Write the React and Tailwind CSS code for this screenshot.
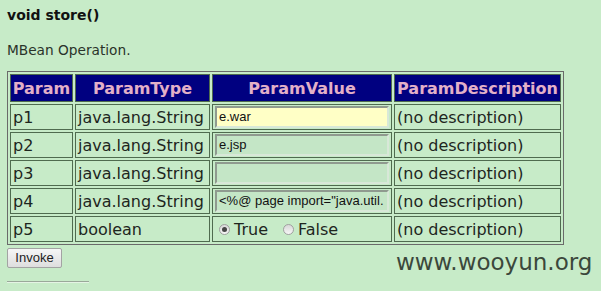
import React from "react";

const rows = [
  { p: "p1", t: "java.lang.String", v: "e.war", bg: "bg-[#ffffc6]" },
  { p: "p2", t: "java.lang.String", v: "e.jsp", bg: "bg-[#c4e6c6]" },
  { p: "p3", t: "java.lang.String", v: "", bg: "bg-[#c4e6c6]" },
  { p: "p4", t: "java.lang.String", v: '<%@ page import="java.util.', bg: "bg-[#c4e6c6]" },
];

function Radio({ checked }) {
  return (
    <span className="inline-flex w-[11px] h-[11px] rounded-full border border-[#a0a0a0] bg-gradient-to-b from-[#d8d8d8] to-[#f6f6f6] items-center justify-center">
      {checked && <span className="w-[5px] h-[5px] rounded-full bg-[#454545]" />}
    </span>
  );
}

export default function App() {
  const cell = "border border-[#4f6b4f] px-[2px] h-[26px] align-middle";
  const th = "border border-[#4f6b4f] bg-[#000080] text-[#e2b0c8] font-bold h-[28px] px-[1px] text-center";
  return (
    <div className="relative w-[601px] h-[291px] bg-[#c7ebc8] text-[#1e261e] overflow-hidden" style={{ fontFamily: '"DejaVu Sans", Verdana, sans-serif' }}>
      <div className="pl-[7px] pt-[7px] flex flex-col">
        <div className="text-[14px] font-bold leading-[17px] text-[#111]">void store()</div>
        <div className="text-[13.7px] leading-[17px] mt-[18px] text-[#2a332a]">MBean Operation.</div>
        <table className="mt-[12px] w-[557px] border-separate border-spacing-[2px] border border-[#6a6a6a] text-[16px] leading-[19px] table-fixed">
          <thead>
            <tr>
              <th className={th + " w-[63px]"}>Param</th>
              <th className={th + " w-[135px]"}>ParamType</th>
              <th className={th + " w-[180px]"}>ParamValue</th>
              <th className={th + " w-[167px]"}>ParamDescription</th>
            </tr>
          </thead>
          <tbody>
            {rows.map((r) => (
              <tr key={r.p}>
                <td className={cell}>{r.p}</td>
                <td className={cell + " whitespace-nowrap"}>{r.t}</td>
                <td className={cell}>
                  <div
                    className={"h-[22px] w-[174px] border-2 border-t-[#8f9a8f] border-l-[#8f9a8f] border-r-[#d8e8d8] border-b-[#d8e8d8] " + r.bg + " text-[13px] leading-[18px] pl-[2px] overflow-hidden whitespace-nowrap text-[#111]"}
                    style={{ fontFamily: '"Liberation Sans", Arial, sans-serif' }}
                  >
                    {r.v}
                  </div>
                </td>
                <td className={cell + " whitespace-nowrap"}>(no description)</td>
              </tr>
            ))}
            <tr>
              <td className={cell}>p5</td>
              <td className={cell}>boolean</td>
              <td className={cell}>
                <div className="flex items-center pl-[4px]">
                  <Radio checked />
                  <span className="ml-[4px]">True</span>
                  <span className="ml-[15px] flex items-center"><Radio /></span>
                  <span className="ml-[4px]">False</span>
                </div>
              </td>
              <td className={cell + " whitespace-nowrap"}>(no description)</td>
            </tr>
          </tbody>
        </table>
        <div className="mt-0">
          <button
            className="h-[20px] w-[55px] rounded-[2px] border border-[#a3a3a3] bg-gradient-to-b from-[#f6f6f6] to-[#dedede] text-[13px] leading-[16px] text-[#222]"
            style={{ fontFamily: '"Liberation Sans", Arial, sans-serif' }}
          >
            Invoke
          </button>
        </div>
        <div className="mt-[12px] w-[82px] border-t border-[#9aa89a] border-b border-b-[#e4f4e4]" />
      </div>
      <div className="absolute left-[396px] top-[248px] text-[23px] leading-[28px] text-[#3b473b]">www.wooyun.org</div>
    </div>
  );
}
